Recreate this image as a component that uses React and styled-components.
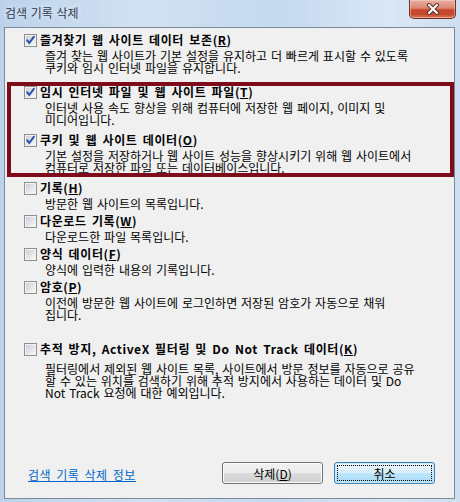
import React from "react";
import styled, { createGlobalStyle } from "styled-components";

const GlobalStyle = createGlobalStyle`
  html, body {
    margin: 0;
    padding: 0;
    background: #c9dbef;
  }
  body {
    font-family: "Noto Sans CJK KR", "Noto Sans", sans-serif;
    font-size: 12px;
    color: #000;
  }
`;

// 항목 데이터
const items = [
  {
    label: "즐겨찾기 웹 사이트 데이터 보존",
    hot: "R",
    checked: true,
    top: 4,
    lines: [
      "즐겨 찾는 웹 사이트가 기본 설정을 유지하고 더 빠르게 표시할 수 있도록",
      "쿠키와 임시 인터넷 파일을 유지합니다.",
    ],
  },
  {
    label: "임시 인터넷 파일 및 웹 사이트 파일",
    hot: "T",
    checked: true,
    top: 10,
    lines: [
      "인터넷 사용 속도 향상을 위해 컴퓨터에 저장한 웹 페이지, 이미지 및",
      "미디어입니다.",
    ],
  },
  {
    label: "쿠키 및 웹 사이트 데이터",
    hot: "O",
    checked: true,
    top: 6,
    lines: [
      "기본 설정을 저장하거나 웹 사이트 성능을 향상시키기 위해 웹 사이트에서",
      "컴퓨터로 저장한 파일 또는 데이터베이스입니다.",
    ],
  },
  {
    label: "기록",
    hot: "H",
    top: 6,
    lines: ["방문한 웹 사이트의 목록입니다."],
  },
  {
    label: "다운로드 기록",
    hot: "W",
    top: 3,
    lines: ["다운로드한 파일 목록입니다."],
  },
  {
    label: "양식 데이터",
    hot: "F",
    top: 3,
    lines: ["양식에 입력한 내용의 기록입니다."],
  },
  {
    label: "암호",
    hot: "P",
    top: 3,
    lines: [
      "이전에 방문한 웹 사이트에 로그인하면 저장된 암호가 자동으로 채워",
      "집니다.",
    ],
  },
  {
    label: "추적 방지, ActiveX 필터링 및 Do Not Track 데이터",
    hot: "K",
    top: 20,
    descTop: 6,
    lines: [
      "필터링에서 제외된 웹 사이트 목록, 사이트에서 방문 정보를 자동으로 공유",
      "할 수 있는 위치를 검색하기 위해 추적 방지에서 사용하는 데이터 및 Do",
      "Not Track 요청에 대한 예외입니다.",
    ],
  },
];

function CheckBox({ checked }) {
  return (
    <svg width="13" height="13" viewBox="0 0 13 13">
      <defs>
        <linearGradient id="cbFill" x1="0" y1="0" x2="1" y2="1">
          <stop offset="0" stopColor="#cbcfd5" />
          <stop offset="1" stopColor="#f7f7f7" />
        </linearGradient>
      </defs>
      <rect x="0.5" y="0.5" width="12" height="12" fill="#f4f4f4" stroke="#8f8f8f" />
      <rect x="2" y="2" width="9" height="9" fill="url(#cbFill)" />
      {checked && (
        <path
          d="M3.2 6.4 L5.3 8.9 L9.8 2.9"
          fill="none"
          stroke="#2b4fb0"
          strokeWidth="1.9"
          strokeLinecap="square"
        />
      )}
    </svg>
  );
}

function CloseGlyph() {
  return (
    <svg width="14" height="12" viewBox="0 0 14 12">
      <path d="M3 2 L11 10 M11 2 L3 10" stroke="#5a2a22" strokeWidth="4" strokeLinecap="round" />
      <path d="M3 2 L11 10 M11 2 L3 10" stroke="#ffffff" strokeWidth="2.2" strokeLinecap="round" />
    </svg>
  );
}

export default function App() {
  return (
    <>
      <GlobalStyle />
      <Window>
        <TitleBar>
          <Title>검색 기록 삭제</Title>
          <CloseButton>
            <CloseGlyph />
          </CloseButton>
        </TitleBar>
        <Client>
          <List>
            {items.map((it) => (
              <Item key={it.hot} $top={it.top}>
                <LabelRow>
                  <CheckBox checked={it.checked} />
                  <Label>
                    {it.label}(<u>{it.hot}</u>)
                  </Label>
                </LabelRow>
                <Desc $top={it.descTop || 2}>
                  {it.lines.map((l) => (
                    <DescLine key={l}>{l}</DescLine>
                  ))}
                </Desc>
              </Item>
            ))}
          </List>
          <Footer>
            <HelpLink>검색 기록 삭제 정보</HelpLink>
            <Buttons>
              <Button>
                삭제(<u>D</u>)
              </Button>
              <Button $primary>취소</Button>
            </Buttons>
          </Footer>
          {/* 강조 표시 상자 */}
          <Highlight />
        </Client>
      </Window>
    </>
  );
}

const Window = styled.div`
  width: 460px;
  height: 502px;
  display: flex;
  flex-direction: column;
  background: linear-gradient(
    90deg,
    #bcd2eb 0%,
    #d2e1f2 30%,
    #c6d9ef 60%,
    #dae7f5 85%,
    #cddef1 100%
  );
  overflow: hidden;
`;

const TitleBar = styled.div`
  height: 27px;
  display: flex;
  justify-content: space-between;
  align-items: flex-start;
  padding: 0 4px 0 5px;
  flex-shrink: 0;
`;

const Title = styled.div`
  margin-top: 6px;
  font-size: 12px;
  line-height: 14px;
  color: #2c3b4e;
  word-spacing: 1px;
  text-shadow: 0 0 6px rgba(255, 255, 255, 0.9);
`;

const CloseButton = styled.div`
  width: 45px;
  height: 18px;
  display: flex;
  align-items: center;
  justify-content: center;
  border: 1px solid #6b3027;
  border-top: none;
  border-radius: 0 0 5px 5px;
  background: linear-gradient(
    #eab0a2 0%,
    #db8672 45%,
    #c8472c 55%,
    #c44a2e 80%,
    #dd7a55 100%
  );
  box-shadow: inset 0 0 0 1px rgba(255, 220, 210, 0.45);
`;

const Client = styled.div`
  position: relative;
  flex: 1;
  margin: 0 5px 3px 4px;
  border: 1px solid #7b8a9b;
  background: #f0f0f0;
  display: flex;
  flex-direction: column;
`;

const List = styled.div`
  display: flex;
  flex-direction: column;
  padding-left: 19px;
`;

const Item = styled.div`
  margin-top: ${(p) => p.$top}px;
`;

const LabelRow = styled.div`
  height: 16px;
  display: flex;
  align-items: center;
  gap: 3px;
`;

const Label = styled.span`
  font-weight: 700;
  font-size: 12px;
  line-height: 16px;
  letter-spacing: 0.6px;
  word-spacing: 2px;
  white-space: nowrap;
`;

const Desc = styled.div`
  margin-top: ${(p) => p.$top}px;
  padding-left: 21px;
`;

const DescLine = styled.div`
  font-size: 12px;
  line-height: 12px;
  height: 12px;
  word-spacing: 1.2px;
  white-space: nowrap;
`;

const Footer = styled.div`
  margin-top: auto;
  display: flex;
  align-items: center;
  justify-content: space-between;
  padding: 0 19px 14px 23px;
`;

const HelpLink = styled.a`
  color: #0066cc;
  text-decoration: underline;
  font-size: 12px;
  line-height: 14px;
  letter-spacing: 0.5px;
  word-spacing: 2px;
  margin-top: 4px;
  cursor: pointer;
`;

const Buttons = styled.div`
  display: flex;
  gap: 11px;
`;

const Button = styled.button`
  width: 101px;
  height: 22px;
  padding: 0;
  font-family: "Noto Sans CJK KR", "Noto Sans", sans-serif;
  font-size: 12px;
  color: #000;
  border-radius: 3px;
  border: 1px solid ${(p) => (p.$primary ? "#3c7fb1" : "#707070")};
  background: ${(p) =>
    p.$primary
      ? "linear-gradient(#eaf6fd 0%, #d9f0fc 50%, #bee6fd 50%, #a7d9f5 100%)"
      : "linear-gradient(#f2f2f2 0%, #ebebeb 50%, #dddddd 50%, #cfcfcf 100%)"};
  box-shadow: inset 0 0 0 1px ${(p) => (p.$primary ? "#ccecfc" : "#fcfcfc")};
  outline: ${(p) => (p.$primary ? "1px dotted #000" : "none")};
  outline-offset: -4px;
`;

const Highlight = styled.div`
  position: absolute;
  left: 2px;
  top: 54px;
  width: 447px;
  height: 95px;
  box-sizing: border-box;
  border: 4px solid #7f0a1c;
  pointer-events: none;
`;
